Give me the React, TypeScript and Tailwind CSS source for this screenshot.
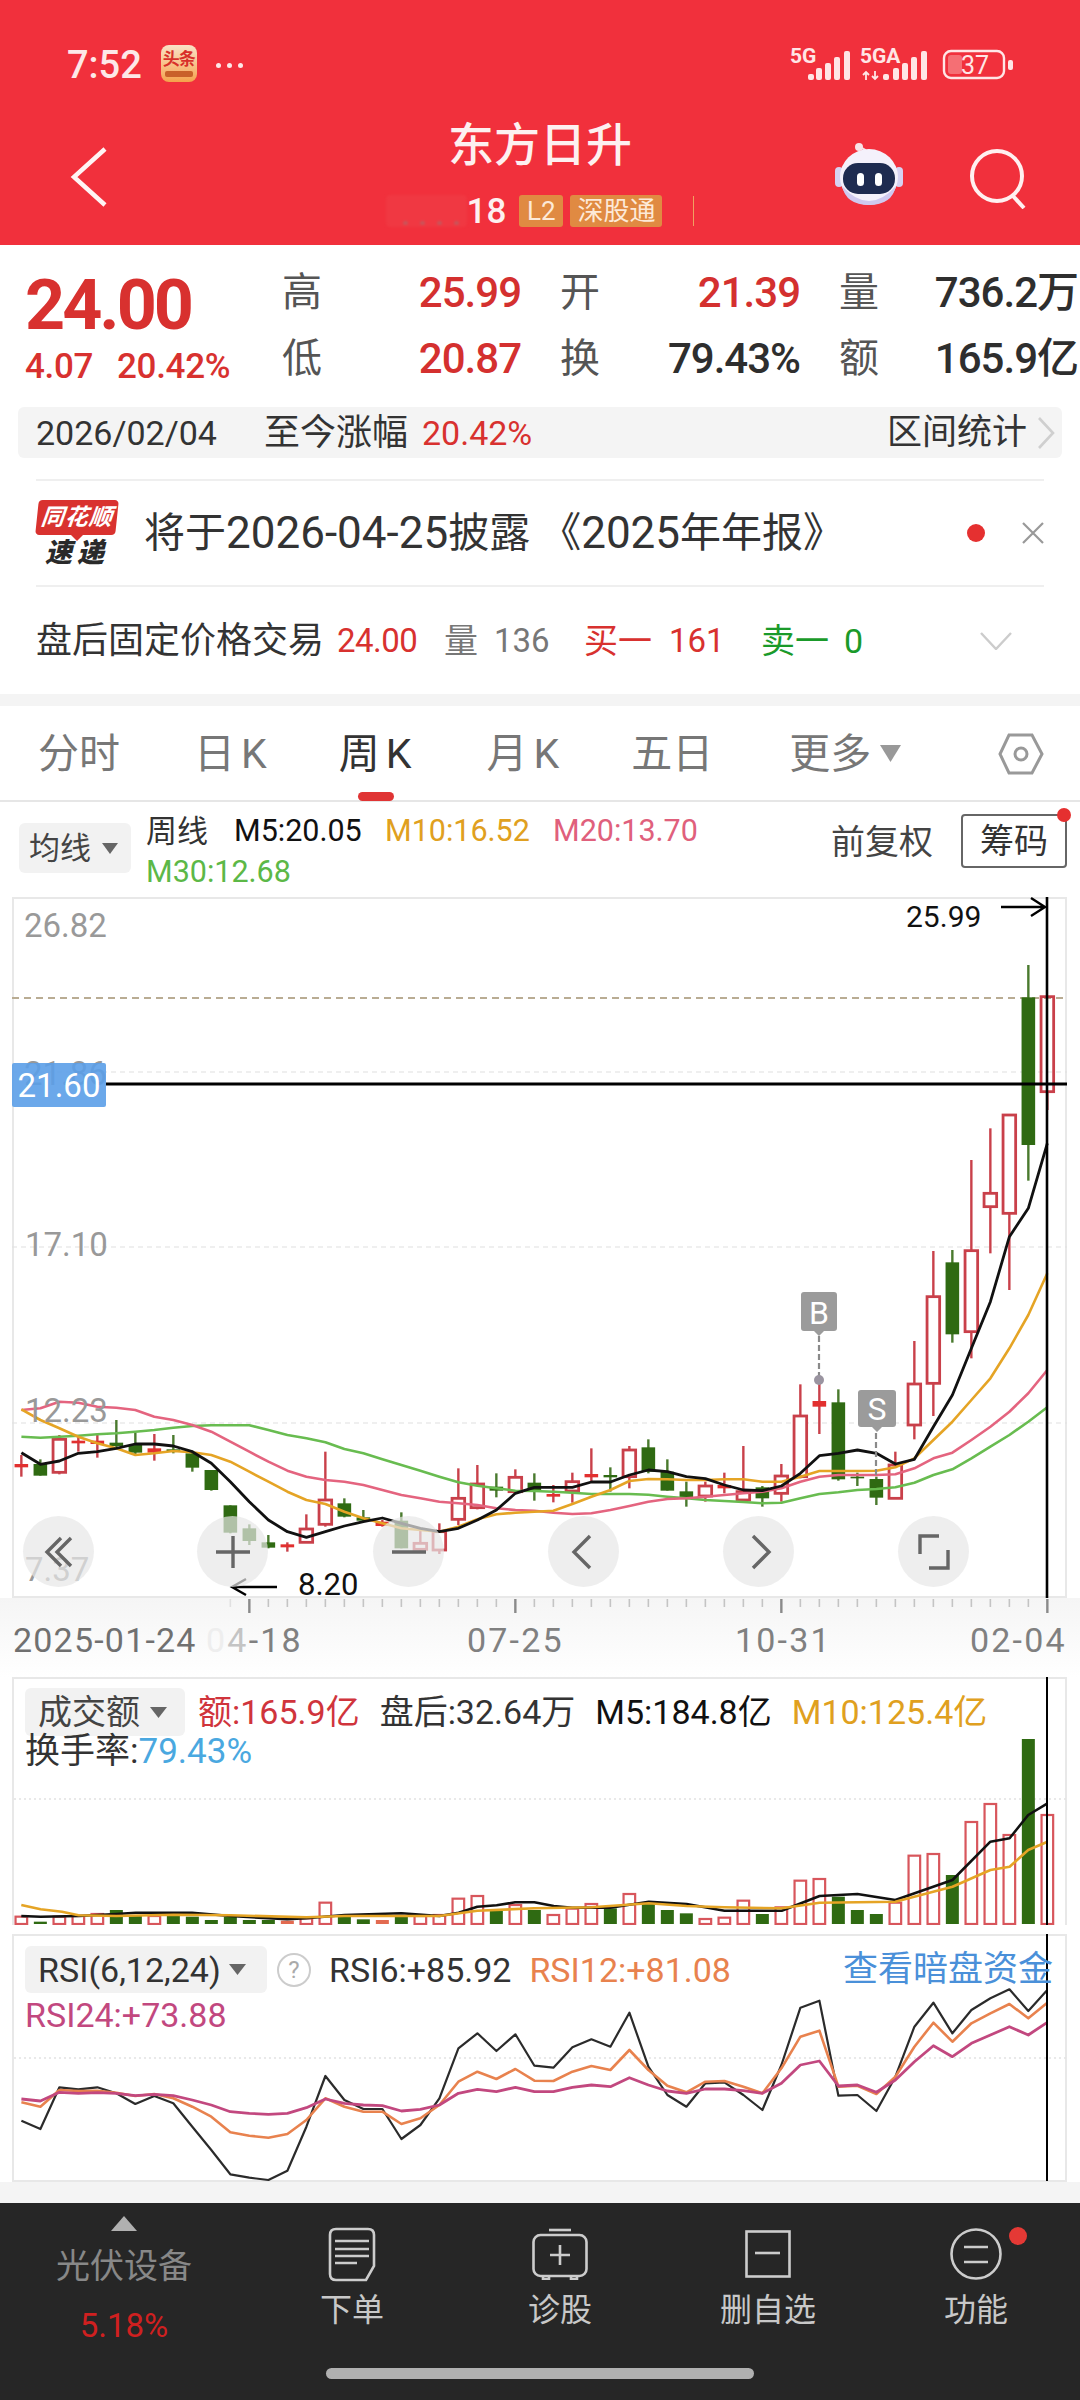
import React from "react";

const X = (i: number) => 21.35 + 19 * i;
const Y = (z: number) => 1280 + z / 3;

// [high, bodyTop, bodyBottom, low, kind] in crop units; kind: h hollow red, r solid red, g solid green
type C = [number, number, number, number, string];
const candles: C[] = [
  [525, 552, 562, 590, "r"], [538, 552, 587, 587, "g"], [465, 478, 577, 583, "h"], [470, 482, 490, 515, "r"],
  [462, 482, 492, 533, "r"], [420, 488, 498, 505, "g"], [458, 495, 518, 525, "g"], [462, 505, 518, 542, "r"],
  [465, 508, 515, 520, "g"], [512, 520, 563, 575, "g"], [570, 570, 630, 632, "g"], [676, 676, 758, 760, "g"],
  [733, 745, 783, 795, "g"], [765, 787, 803, 805, "g"], [787, 793, 802, 815, "r"], [703, 747, 787, 787, "h"],
  [515, 660, 733, 740, "h"], [655, 670, 710, 712, "g"], [690, 712, 722, 725, "g"], [720, 725, 738, 740, "r"],
  [697, 722, 805, 805, "g"], [745, 790, 808, 815, "h"], [730, 755, 810, 822, "h"], [565, 655, 718, 735, "h"],
  [555, 612, 683, 688, "h"], [580, 620, 632, 652, "g"], [568, 592, 635, 640, "h"], [580, 608, 630, 662, "g"],
  [615, 642, 650, 667, "r"], [578, 605, 633, 668, "h"], [505, 582, 592, 605, "r"], [562, 585, 592, 635, "g"],
  [498, 510, 590, 625, "h"], [478, 502, 575, 580, "g"], [538, 575, 632, 632, "g"], [605, 634, 655, 680, "g"],
  [605, 618, 648, 665, "h"], [578, 615, 625, 640, "r"], [498, 635, 660, 660, "h"], [618, 622, 655, 680, "g"],
  [552, 588, 640, 665, "h"], [313, 408, 590, 595, "h"], [310, 363, 380, 462, "r"], [328, 367, 598, 602, "g"],
  [578, 590, 595, 618, "g"], [590, 597, 653, 675, "g"], [515, 555, 655, 655, "h"], [183, 312, 435, 478, "h"],
  [-87, 50, 310, 408, "h"], [-90, -53, 163, 188, "g"], [-360, -88, 155, 235, "h"], [-455, -260, -220, -80, "h"],
  [-495, -495, -200, 30, "h"], [-945, -848, -405, -298, "g"], [-850, -850, -565, -510, "h"],
];

const m5 = [518,553,543,520,515,505,492,492,498,515,550,605,665,720,755,772,755,738,725,714,730,745,755,745,720,690,640,622,622,622,606,606,585,570,575,590,596,615,630,632,618,580,527,520,510,520,552,538,440,345,205,65,-130,-215,-410];
const m10 = [388,420,445,470,490,505,525,520,513,517,525,545,575,605,635,660,672,695,715,730,745,750,755,740,718,703,698,695,692,672,650,630,603,597,598,600,600,598,598,605,605,590,573,573,573,572,562,535,480,425,360,295,205,105,-20];
const m20 = [390,385,365,368,380,383,390,410,420,435,455,485,515,545,572,590,600,605,615,630,645,655,665,670,675,685,690,692,698,702,700,690,678,665,657,655,650,645,640,635,625,605,590,585,585,585,583,565,535,518,480,440,395,340,270];
const m30 = [470,473,470,467,463,460,455,450,443,438,436,436,436,450,465,475,487,507,520,538,555,572,590,607,617,625,632,633,635,638,642,642,642,644,650,655,660,663,666,670,668,655,642,637,630,627,622,608,585,568,535,500,465,425,382];
const pts = (a: number[]) => a.map((v, i) => `${X(i).toFixed(1)},${Y(v).toFixed(1)}`).join(" ");

const VY = (z: number) => 1670 + z / 3;
const bars: [number, string][] = [
  [740,"h"],[755,"g"],[740,"h"],[738,"h"],[732,"h"],[720,"g"],[738,"g"],[738,"h"],[738,"g"],[740,"g"],[750,"g"],[740,"g"],[750,"g"],[750,"g"],[752,"o"],[745,"h"],[698,"h"],[740,"g"],[748,"g"],[750,"o"],[738,"g"],[738,"h"],[735,"h"],[686,"h"],[678,"h"],[722,"g"],[705,"h"],[720,"g"],[735,"h"],[716,"h"],[702,"h"],[715,"g"],[672,"h"],[700,"g"],[720,"g"],[730,"g"],[747,"h"],[743,"h"],[692,"h"],[732,"g"],[712,"h"],[632,"h"],[627,"h"],[680,"g"],[720,"g"],[732,"g"],[698,"h"],[557,"h"],[552,"h"],[615,"g"],[456,"h"],[402,"h"],[495,"h"],[207,"g"],[435,"h"],
];
const vpts = (a: number[][]) => a.map(([x, y]) => `${(x / 1.452).toFixed(1)},${VY(y).toFixed(1)}`).join(" ");
const vm5 = [[31,738],[59,740],[114,738],[169,732],[197,728],[279,728],[335,738],[417,748],[445,745],[500,735],[583,730],[638,738],[666,728],[693,710],[721,706],[748,697],[776,697],[804,708],[831,713],[886,713],[942,695],[997,702],[1052,722],[1135,722],[1190,678],[1245,672],[1300,690],[1383,630],[1438,515],[1466,505],[1493,435],[1521,400]];
const vm10 = [[31,705],[59,718],[90,725],[114,736],[169,738],[252,734],[335,736],[445,742],[500,738],[583,738],[638,738],[693,722],[776,715],[859,712],[942,700],[997,708],[1052,712],[1135,715],[1190,698],[1300,695],[1355,665],[1383,650],[1438,600],[1466,590],[1493,540],[1521,515]];

const RY = (z: number) => 1930 + z / 3;
const rsi6 = [572,597,472,478,472,490,522,498,520,590,660,733,743,750,722,590,438,510,537,537,627,585,505,355,310,363,313,407,413,352,328,350,248,410,495,530,460,457,495,540,405,233,212,497,495,543,440,290,218,310,240,205,178,243,180];
const rsi12 = [517,530,480,483,482,488,498,492,505,530,560,607,617,623,612,570,505,530,545,545,582,565,525,455,425,447,417,452,453,425,408,420,360,420,467,487,455,453,470,490,415,320,302,470,467,492,440,350,278,335,280,250,222,265,218];
const rsi24 = [507,513,487,490,488,490,497,493,497,510,525,545,550,553,550,533,507,520,525,527,543,538,525,490,478,485,472,485,485,472,465,470,443,465,483,490,477,477,482,490,460,405,393,468,465,487,450,395,347,380,340,315,290,315,277];
const rpts = (a: number[]) => a.map((v, i) => `${X(i).toFixed(1)},${RY(v).toFixed(1)}`).join(" ");

function Tri({ w, h, color, up }: { w: number; h: number; color: string; up?: boolean }) {
  return (
    <svg width={w} height={h} viewBox="0 0 10 10" preserveAspectRatio="none" className="block shrink-0">
      <polygon points={up ? "5,0 10,10 0,10" : "0,0 10,0 5,10"} fill={color} />
    </svg>
  );
}

function StatusIcons() {
  const b1 = [[808, 74], [816, 68], [825, 63], [834, 57], [844, 51]];
  const b2 = [[883, 74], [893, 68], [902, 63], [911, 57], [921, 51]];
  const c = "#ffe6e6";
  return (
    <svg width="230" height="44" viewBox="786 40 230 44" className="block">
      <text x="790" y="63" fontSize="21" fontWeight="700" fill={c} fontFamily="Roboto">5G</text>
      <text x="860" y="63" fontSize="21" fontWeight="700" fill={c} fontFamily="Roboto">5GA</text>
      {[...b1, ...b2].map(([x, y], i) => (
        <rect key={i} x={x} y={y} width="6" height={80 - y} rx="2" fill={c} />
      ))}
      <path d="M866 72v8M863 75l3-3 3 3M875 71v8M872 76l3 3 3-3" stroke={c} strokeWidth="1.8" fill="none" />
      <rect x="944" y="51" width="60" height="27" rx="7" fill="none" stroke={c} strokeWidth="2.4" />
      <rect x="948" y="55" width="14" height="19" rx="3" fill="#f56f74" />
      <rect x="1008" y="60" width="5" height="10" rx="2" fill={c} />
      <text x="975" y="74" fontSize="25" textAnchor="middle" fill={c} fontFamily="Roboto">37</text>
    </svg>
  );
}

function Robot() {
  return (
    <svg width="68" height="62" viewBox="836 143 68 62" className="block">
      <path d="M861 148q6 0 8 7" stroke="#f6dfe4" strokeWidth="2" fill="none" />
      <circle cx="860" cy="147" r="4" fill="#f8e4e8" />
      <rect x="836" y="167" width="8" height="20" rx="4" fill="#d6d2f2" />
      <rect x="896" y="167" width="8" height="20" rx="4" fill="#d6d2f2" />
      <ellipse cx="870" cy="177" rx="29" ry="28" fill="#f4f1fb" />
      <path d="M843 186q27 30 54 0q-4 19-27 19t-27-19z" fill="#cfc9ef" />
      <rect x="844" y="163" width="52" height="31" rx="15" fill="#1e2b50" />
      <rect x="858" y="173" width="7" height="13" rx="3.5" fill="#fff" />
      <rect x="876" y="173" width="7" height="13" rx="3.5" fill="#fff" />
    </svg>
  );
}

function Grid({ y }: { y: number }) {
  return <line x1="12" x2="1067" y1={y} y2={y} stroke="#e0e0e0" strokeWidth="1.2" strokeDasharray="5 4" />;
}

function PriceChart() {
  return (
    <svg viewBox="0 897 1080 701" width="1080" height="701" className="absolute left-0 top-0">
      <line x1="12" x2="1067" y1="998" y2="998" stroke="#b9ac93" strokeWidth="1.8" strokeDasharray="7 5" />
      <Grid y={1072} />
      <Grid y={1247} />
      <Grid y={1423} />
      {candles.map(([hi, top, bot, lo, k], i) => {
        const cx = X(i);
        const col = k === "g" ? "#2f6a12" : k === "r" ? "#e2302f" : "#c9404a";
        const wick = k === "g" ? "#4a7a2e" : "#c9404a";
        if (k === "h") {
          return (
            <g key={i}>
              <line x1={cx} x2={cx} y1={Y(hi)} y2={Y(top)} stroke={wick} strokeWidth="2.4" />
              <line x1={cx} x2={cx} y1={Y(bot)} y2={Y(lo)} stroke={wick} strokeWidth="2.4" />
              <rect x={cx - 6.3} y={Y(top)} width="12.6" height={Y(bot) - Y(top)} fill={i === 54 ? "none" : "#fff"} stroke={col} strokeWidth="2.8" />
            </g>
          );
        }
        return (
          <g key={i}>
            <line x1={cx} x2={cx} y1={Y(hi)} y2={Y(lo)} stroke={wick} strokeWidth="2.4" />
            <rect x={cx - 6.8} y={Y(top)} width="13.6" height={Y(bot) - Y(top)} fill={col} />
          </g>
        );
      })}
      <polyline points={pts(m30)} fill="none" stroke="#68bc50" strokeWidth="2.6" strokeLinejoin="round" />
      <polyline points={pts(m20)} fill="none" stroke="#e4647f" strokeWidth="2.6" strokeLinejoin="round" />
      <polyline points={pts(m10)} fill="none" stroke="#e5a425" strokeWidth="2.6" strokeLinejoin="round" />
      <polyline points={pts(m5)} fill="none" stroke="#111" strokeWidth="2.8" strokeLinejoin="round" />
      {/* B / S markers */}
      <line x1="819" x2="819" y1="1336" y2="1381" stroke="#8a8a8a" strokeWidth="2.2" strokeDasharray="6 3" />
      <circle cx="819" cy="1380" r="5" fill="#9a94a0" />
      <path d="M801 1295a3 3 0 0 1 3-3h30a3 3 0 0 1 3 3v33a3 3 0 0 1-3 3h-10l-5 5-5-5h-10a3 3 0 0 1-3-3z" fill="#9b9b9b" />
      <line x1="876" x2="876" y1="1433" y2="1476" stroke="#8a8a8a" strokeWidth="2.2" strokeDasharray="6 3" />
      <path d="M858 1393a3 3 0 0 1 3-3h32a3 3 0 0 1 3 3v31a3 3 0 0 1-3 3h-11l-5 5-5-5h-11a3 3 0 0 1-3-3z" fill="#9b9b9b" />
      {/* crosshair */}
      <line x1="106" x2="1067" y1="1084" y2="1084" stroke="#000" strokeWidth="3" />
      <line x1="1047" x2="1047" y1="897" y2="1598" stroke="#000" strokeWidth="2.6" />
      {/* max / min arrows */}
      <path d="M1001 907H1045M1031 898L1045 907L1031 916" stroke="#000" strokeWidth="2.4" fill="none" />
      <path d="M277 1587H232M246 1579L232 1587L246 1595" stroke="#000" strokeWidth="2.4" fill="none" />
    </svg>
  );
}

function Round({ left, children }: { left: string; children: React.ReactNode }) {
  return (
    <div className={`absolute top-[619px] flex h-[71px] w-[71px] items-center justify-center rounded-full bg-[rgba(231,231,231,0.7)] ${left}`}>
      <svg width="44" height="44" viewBox="0 0 44 44" fill="none" stroke="#666" strokeWidth="3.4">
        {children}
      </svg>
    </div>
  );
}

function XTicks() {
  const ticks = [];
  for (let i = 11; i < 55; i++) {
    const major = i === 12 || i === 26 || i === 40 || i === 54;
    ticks.push(
      <line key={i} x1={X(i)} x2={X(i)} y1="1" y2={major ? 15 : 9} stroke={i === 11 ? "#e0e0e0" : major ? "#8a8a8a" : "#c4c4c4"} strokeWidth={major ? 2.4 : 1.6} />
    );
  }
  return (
    <svg width="1080" height="16" viewBox="0 0 1080 16" className="block">
      {ticks}
    </svg>
  );
}

function VolumeChart() {
  return (
    <svg viewBox="0 1677 1080 248" width="1080" height="248" className="absolute left-0 top-0">
      <line x1="14" x2="1066" y1="1799" y2="1799" stroke="#e2e2e2" strokeWidth="1.4" strokeDasharray="2 3" />
      {bars.map(([t, k], i) => {
        const cx = X(i);
        const y = VY(t);
        if (k === "g") return <rect key={i} x={cx - 6.5} y={y} width="13" height={1924 - y} fill="#2f6a12" />;
        if (k === "o") return <rect key={i} x={cx - 6.5} y={y} width="13" height={1924 - y} fill="#e26a50" />;
        return <rect key={i} x={cx - 5.8} y={y} width="11.6" height={1924 - y} fill="none" stroke="#d8565c" strokeWidth="2.2" />;
      })}
      <polyline points={vpts(vm5)} fill="none" stroke="#111" strokeWidth="2.6" strokeLinejoin="round" />
      <polyline points={vpts(vm10)} fill="none" stroke="#e5a425" strokeWidth="2.6" strokeLinejoin="round" />
      <line x1="1047" x2="1047" y1="1677" y2="1925" stroke="#000" strokeWidth="2" />
    </svg>
  );
}

function RsiChart() {
  return (
    <svg viewBox="0 1934 1080 248" width="1080" height="248" className="absolute left-0 top-0">
      <line x1="14" x2="1066" y1="2058" y2="2058" stroke="#e2e2e2" strokeWidth="1.4" strokeDasharray="2 3" />
      <polyline points={rpts(rsi6)} fill="none" stroke="#2b2b2b" strokeWidth="2.2" strokeLinejoin="round" />
      <polyline points={rpts(rsi12)} fill="none" stroke="#e8824e" strokeWidth="2.6" strokeLinejoin="round" />
      <polyline points={rpts(rsi24)} fill="none" stroke="#c2487f" strokeWidth="2.8" strokeLinejoin="round" />
      <line x1="1047" x2="1047" y1="1934" y2="2181" stroke="#000" strokeWidth="2" />
    </svg>
  );
}

function Cell({ label, value, dark }: { label: string; value: string; dark?: boolean }) {
  return (
    <div className="flex h-[66px] items-center justify-between">
      <span className="text-[40px] leading-none text-[#555]">{label}</span>
      <span className={`text-[42px] font-medium leading-none tracking-[-1px] ${dark ? "text-[#2e2e2e]" : "text-[#d4302f]"}`}>{value}</span>
    </div>
  );
}

function NavItem({ icon, label }: { icon: React.ReactNode; label: string }) {
  return (
    <div className="flex flex-col items-center pt-[24px]">
      <div className="flex h-[54px] items-center justify-center">{icon}</div>
      <span className="mt-[13px] text-[32px] leading-[32px] text-[#c8c8c8]">{label}</span>
    </div>
  );
}

export default function App() {
  return (
    <div className="flex h-[2400px] w-[1080px] flex-col overflow-hidden bg-white font-['Roboto','Noto_Sans_CJK_SC',sans-serif]">
      {/* Header */}
      <header className="h-[245px] shrink-0 bg-[#f1303c] text-white">
        <div className="flex h-[120px] items-start pl-[67px] pr-[64px] pt-[45px]">
          <span className="text-[38px] font-medium leading-[40px] text-[#fde8e8]">7:52</span>
          <div className="ml-[19px] flex h-[37px] w-[36px] flex-col items-center overflow-hidden rounded-[8px] bg-gradient-to-b from-[#f9e2c6] to-[#f4a24a] pt-[5px]">
            <span className="text-[17px] font-bold leading-[19px] tracking-[-1px] text-[#d8302a]">头条</span>
            <span className="mt-[2px] h-[6px] w-[28px] rounded-[2px] bg-[#c9602a]" />
          </div>
          <div className="ml-[19px] mt-[18px] flex gap-[6px]">
            <span className="h-[5px] w-[5px] rounded-full bg-[#fde8e8]" />
            <span className="h-[5px] w-[5px] rounded-full bg-[#fde8e8]" />
            <span className="h-[5px] w-[5px] rounded-full bg-[#fde8e8]" />
          </div>
          <div className="ml-auto mt-[-5px]">
            <StatusIcons />
          </div>
        </div>
        <div className="grid h-[125px] grid-cols-[1fr_auto_1fr]">
          <div className="pl-[70px] pt-[27px]">
            <svg width="37" height="60" viewBox="0 0 37 60" fill="none" stroke="#fff4f4" strokeWidth="4.5">
              <path d="M35 2L4 30L35 58" />
            </svg>
          </div>
          <div className="flex flex-col items-center">
            <span className="text-[46px] font-medium leading-[50px] text-[#fdf0f0]">东方日升</span>
            <div className="mt-[25px] flex h-[32px] items-center">
              <span className="flex h-[32px] w-[81px] items-end justify-end gap-[12px] rounded-[4px] bg-[#f03842] pb-[2px] pr-[8px] blur-[1px]">
                <span className="h-[4px] w-[5px] rounded-full bg-[#c8555a]" />
                <span className="h-[4px] w-[5px] rounded-full bg-[#c8555a]" />
                <span className="h-[4px] w-[5px] rounded-full bg-[#c8555a]" />
                <span className="h-[4px] w-[5px] rounded-full bg-[#c8555a]" />
              </span>
              <span className="text-[35px] font-medium leading-none text-[#fdf0f0]">18</span>
              <span className="ml-[13px] flex h-[32px] w-[44px] items-center justify-center rounded-[3px] bg-[#e08a42] text-[26px] leading-none text-[#fde9d8]">L2</span>
              <span className="ml-[7px] flex h-[32px] w-[92px] items-center justify-center rounded-[3px] bg-[#e08a42] text-[26px] leading-none text-[#fde9d8]">深股通</span>
              <span className="ml-[31px] h-[30px] w-[1px] bg-[#f0a060]" />
            </div>
          </div>
          <div className="flex items-start justify-end pr-[51px] pt-[23px]">
            <Robot />
            <svg width="60" height="60" viewBox="0 0 60 60" fill="none" stroke="#fff0f0" strokeWidth="4" className="ml-[66px] mt-[6px]">
              <circle cx="28" cy="27" r="25" />
              <path d="M44 47L55 59" />
            </svg>
          </div>
        </div>
      </header>

      {/* Quote */}
      <section className="h-[234px] shrink-0">
        <div className="flex h-[162px] items-start">
          <div className="w-[282px] shrink-0 pl-[25px] pt-[23px]">
            <div className="text-[70px] font-bold leading-[74px] tracking-[-3px] text-[#d8312f]">24.00</div>
            <div className="mt-[7px] flex text-[35px] font-medium leading-[36px] tracking-[-0.3px] text-[#d8312f]">
              <span className="w-[92px]">4.07</span>
              <span>20.42%</span>
            </div>
          </div>
          <div className="grid grid-cols-[239px_240px_239px] gap-x-[39px] pt-[15px]">
            <Cell label="高" value="25.99" />
            <Cell label="开" value="21.39" />
            <Cell label="量" value="736.2万" dark />
            <Cell label="低" value="20.87" />
            <Cell label="换" value="79.43%" dark />
            <Cell label="额" value="165.9亿" dark />
          </div>
        </div>
        <div className="mx-[18px] flex h-[51px] items-center rounded-[6px] bg-[#f4f4f4] pl-[18px] pr-[7px] text-[35px] leading-none text-[#333]">
          <span className="text-[34px]">2026/02/04</span>
          <span className="ml-[47px] text-[36px]">至今涨幅</span>
          <span className="ml-[14px] text-[34px] text-[#d8312f]">20.42%</span>
          <span className="ml-auto">区间统计</span>
          <svg width="18" height="32" viewBox="0 0 18 32" fill="none" stroke="#cfcfcf" strokeWidth="2.6" className="ml-[10px]">
            <path d="M2 1L16 16L2 31" />
          </svg>
        </div>
      </section>

      {/* Notice */}
      <section className="mx-[36px] flex h-[108px] shrink-0 items-center border-y-2 border-[#efefef]">
        <div className="flex w-[82px] shrink-0 flex-col items-center">
          <div className="flex h-[35px] w-[80px] -skew-x-6 items-center justify-center rounded-[4px] bg-[#d9322f] text-[23px] font-bold italic leading-none tracking-[1px] text-white">
            同花顺
          </div>
          <div className="h-0 w-0 border-x-[6px] border-t-[6px] border-x-transparent border-t-[#d9322f]" />
          <div className="mt-[-1px] text-[27px] font-black italic leading-[27px] tracking-[5px] text-[#2a2a2a]">速递</div>
        </div>
        <span className="ml-[26px] flex items-center text-[41px] leading-none text-[#333]">
          将于<span className="text-[44px]">2026-04-25</span>披露<span className="ml-[10px]">《</span><span className="text-[44px]">2025</span>年年报<span>》</span>
        </span>
        <span className="ml-auto h-[18px] w-[18px] rounded-full bg-[#e53030]" />
        <svg width="22" height="22" viewBox="0 0 22 22" stroke="#999" strokeWidth="2.2" className="ml-[37px]">
          <path d="M1 1L21 21M21 1L1 21" />
        </svg>
      </section>

      {/* After-hours row */}
      <section className="flex h-[107px] shrink-0 items-center pl-[36px] text-[34px] leading-none">
        <span className="w-[301px] text-[36px] text-[#333]">盘后固定价格交易</span>
        <span className="w-[107px] text-[33px] tracking-[-0.5px] text-[#d8312f]">24.00</span>
        <span className="w-[50px] text-[#777]">量</span>
        <span className="w-[90px] text-[33px] text-[#777]">136</span>
        <span className="w-[85px] text-[#d8312f]">买一</span>
        <span className="w-[92px] text-[33px] text-[#d8312f]">161</span>
        <span className="w-[83px] text-[#1a9a2a]">卖一</span>
        <span className="text-[#1a9a2a]">0</span>
        <svg width="32" height="18" viewBox="0 0 32 18" fill="none" stroke="#ccc" strokeWidth="2.4" className="ml-[117px]">
          <path d="M1 1L16 17L31 1" />
        </svg>
      </section>

      <div className="h-[12px] shrink-0 bg-[#f4f4f4]" />

      {/* Tabs */}
      <nav className="relative flex h-[96px] shrink-0 items-start border-b-2 border-[#e6e6e6] pl-[38px] pt-[26px] text-[41px] leading-[44px] text-[#777]">
        <span>分时</span>
        <span className="ml-[74px]">
          日<span className="ml-[6px]">K</span>
        </span>
        <span className="relative ml-[72px] text-[#333]">
          周<span className="ml-[6px]">K</span>
          <span className="absolute left-[19px] top-[60px] h-[9px] w-[36px] rounded-full bg-[#e03434]" />
        </span>
        <span className="ml-[75px]">
          月<span className="ml-[6px]">K</span>
        </span>
        <span className="ml-[72px]">五日</span>
        <span className="ml-[76px]">更多</span>
        <span className="ml-[9px] mt-[13px]">
          <Tri w={21} h={17} color="#999" />
        </span>
        <svg width="46" height="42" viewBox="999 733 46 42" fill="none" stroke="#999" strokeWidth="3" className="ml-[97px] mt-[1px]">
          <path d="M1010 735H1033L1043 754L1033 773H1010L1001 754Z" />
          <circle cx="1022" cy="754" r="6" />
        </svg>
      </nav>

      {/* MA legend */}
      <section className="flex h-[95px] shrink-0 pl-[19px] pr-[13px]">
        <div className="mt-[21px] flex h-[50px] w-[112px] shrink-0 items-center rounded-[6px] bg-[#f2f2f2] pl-[10px] text-[31px] leading-none text-[#444]">
          均线
          <span className="ml-[11px]">
            <Tri w={16} h={11} color="#666" />
          </span>
        </div>
        <div className="ml-[15px] pt-[10px] text-[30.5px] leading-none">
          <div className="flex h-[38px] items-center">
            <span className="w-[88px] text-[31px] text-[#333]">周线</span>
            <span className="w-[151px] text-[#111]">M5:20.05</span>
            <span className="w-[168px] text-[#e0a020]">M10:16.52</span>
            <span className="text-[#e0607c]">M20:13.70</span>
          </div>
          <div className="flex h-[44px] items-center text-[#5cb847]">M30:12.68</div>
        </div>
        <span className="ml-auto mt-[23px] text-[34px] leading-none text-[#444]">前复权</span>
        <div className="relative ml-[28px] mt-[12px] flex h-[54px] w-[106px] items-center justify-center rounded-[4px] border-2 border-[#666] text-[34px] leading-none text-[#333]">
          筹码
          <span className="absolute right-[-6px] top-[-8px] h-[14px] w-[14px] rounded-full bg-[#e53030]" />
        </div>
      </section>

      {/* Price chart */}
      <section className="relative h-[701px] shrink-0">
        <div className="absolute inset-y-0 left-[12px] right-[13px] border-2 border-[#e8e8e8]" />
        <PriceChart />
        <span className="absolute left-[24px] top-[12px] text-[33px] leading-none text-[#999]">26.82</span>
        <span className="absolute left-[24px] top-[160px] text-[33px] leading-none text-[#999]">21.86</span>
        <span className="absolute left-[25px] top-[331px] text-[33px] leading-none text-[#999]">17.10</span>
        <span className="absolute left-[25px] top-[497px] text-[33px] leading-none text-[#999]">12.23</span>
        <span className="absolute left-[25px] top-[656px] text-[33px] leading-none text-[#999]">7.37</span>
        <span className="absolute left-[12px] top-[166px] flex h-[44px] w-[94px] items-center justify-center rounded-[2px] bg-[#5b9fe8]/90 text-[33px] leading-none text-white">
          21.60
        </span>
        <span className="absolute left-[906px] top-[5px] text-[30px] leading-none text-[#111]">25.99</span>
        <span className="absolute left-[298px] top-[672px] text-[31px] leading-none text-[#111]">8.20</span>
        <span className="absolute left-[801px] top-[397px] flex h-[38px] w-[36px] items-center justify-center text-[32px] leading-none text-white">B</span>
        <span className="absolute left-[858px] top-[494px] flex h-[36px] w-[38px] items-center justify-center text-[32px] leading-none text-white">S</span>
        <Round left="left-[23px]">
          <path d="M24 8L10 22L24 36M34 8L20 22L34 36" />
        </Round>
        <Round left="left-[197px]">
          <path d="M22 6V38M5 22H39" />
        </Round>
        <Round left="left-[373px]">
          <path d="M5 22H39" />
        </Round>
        <Round left="left-[548px]">
          <path d="M28 6L12 22L28 38" />
        </Round>
        <Round left="left-[723px]">
          <path d="M16 6L32 22L16 38" />
        </Round>
        <Round left="left-[898px]">
          <path d="M27 6H8V24M17 38H36V20" />
        </Round>
      </section>

      {/* X axis */}
      <section className="h-[79px] shrink-0 bg-gradient-to-b from-[#f5f5f5] to-white">
        <XTicks />
        <div className="mt-[11px] grid grid-cols-[193px_261px_268px_235px_auto] pl-[13px] text-[34px] leading-[30px] tracking-[2.2px] text-[#808080]">
          <span className="whitespace-nowrap tracking-[1.2px] text-[#707070]">2025-01-24</span>
          <span className="whitespace-nowrap">
            <span className="text-[#eeeeee]">0</span>
            <span className="text-[#c4c4c4]">4</span>-18
          </span>
          <span>07-25</span>
          <span>10-31</span>
          <span>02-04</span>
        </div>
      </section>

      {/* Volume */}
      <section className="relative h-[248px] shrink-0">
        <div className="absolute inset-0 left-[12px] right-[13px] border-x-2 border-t-2 border-[#e8e8e8]" />
        <VolumeChart />
        <div className="relative pl-[25px] pt-[11px] text-[34px] leading-none">
          <div className="flex items-center">
            <div className="flex h-[48px] w-[160px] items-center rounded-[6px] bg-[#f2f2f2] pl-[13px] text-[#444]">
              成交额
              <span className="ml-[10px]">
                <Tri w={17} h={11} color="#666" />
              </span>
            </div>
            <span className="ml-[13px] text-[#d0343c]">额:165.9亿</span>
            <span className="ml-[20px] text-[#333]">盘后:32.64万</span>
            <span className="ml-[20px] text-[#111]">M5:184.8亿</span>
            <span className="ml-[20px] text-[#e0a020]">M10:125.4亿</span>
          </div>
          <div className="mt-[-2px] text-[35px] text-[#333]">
            换手率:<span className="text-[#4aa8e0]">79.43%</span>
          </div>
        </div>
      </section>

      <div className="h-[9px] shrink-0" />

      {/* RSI */}
      <section className="relative h-[248px] shrink-0">
        <div className="absolute inset-0 left-[12px] right-[13px] border-2 border-[#e8e8e8]" />
        <RsiChart />
        <div className="relative pl-[25px] pt-[12px] text-[34px] leading-none">
          <div className="flex items-center">
            <div className="flex h-[47px] w-[242px] items-center rounded-[6px] bg-[#f2f2f2] pl-[13px] text-[#333]">
              RSI(6,12,24)
              <span className="ml-[8px]">
                <Tri w={17} h={11} color="#666" />
              </span>
            </div>
            <span className="ml-[10px] flex h-[34px] w-[34px] items-center justify-center rounded-full border-2 border-[#ccc] text-[24px] text-[#aaa]">?</span>
            <span className="ml-[18px] text-[#333]">RSI6:+85.92</span>
            <span className="ml-[18px] text-[#e8824e]">RSI12:+81.08</span>
            <span className="ml-[112px] text-[35px] text-[#4a90d9]">查看暗盘资金</span>
          </div>
          <div className="mt-[5px] text-[#c2487f]">RSI24:+73.88</div>
        </div>
      </section>

      <div className="flex-1 bg-[#f4f4f4]" />

      {/* Bottom bar */}
      <footer className="h-[197px] shrink-0 bg-[#262626]">
        <div className="grid h-[165px] grid-cols-[248px_repeat(4,208px)]">
          <div className="flex flex-col items-center pt-[13px]">
            <Tri w={26} h={15} color="#b0b0b0" up />
            <span className="mt-[17px] text-[34px] leading-[36px] text-[#888]">光伏设备</span>
            <span className="mt-[25px] text-[33px] leading-[34px] text-[#d02020]">5.18%</span>
          </div>
          <NavItem
            label="下单"
            icon={
              <svg width="48" height="55" viewBox="0 0 48 55" fill="none" stroke="#ccc" strokeWidth="2.6">
                <path d="M8 2H40Q46 2 46 8V39L38 53H8Q2 53 2 47V8Q2 2 8 2Z" />
                <path d="M7 14H41M7 22H41M7 29H41M7 36H29" />
              </svg>
            }
          />
          <NavItem
            label="诊股"
            icon={
              <svg width="56" height="52" viewBox="0 0 56 52" fill="none" stroke="#ccc" strokeWidth="2.6">
                <path d="M17 2H39" />
                <rect x="1.5" y="7" width="53" height="41" rx="7" />
                <path d="M28 17V37M18 27H38" />
                <path d="M11 48V51H17V48M39 48V51H45V48" />
              </svg>
            }
          />
          <NavItem
            label="删自选"
            icon={
              <svg width="46" height="48" viewBox="0 0 46 48" fill="none" stroke="#ccc" strokeWidth="2.6">
                <rect x="1.5" y="1.5" width="43" height="45" />
                <path d="M10 23H35" />
              </svg>
            }
          />
          <div className="relative">
            <NavItem
              label="功能"
              icon={
                <svg width="52" height="52" viewBox="0 0 52 52" fill="none" stroke="#ccc" strokeWidth="2.6">
                  <circle cx="26" cy="26" r="24.5" />
                  <path d="M14 19H38M14 34H38" />
                </svg>
              }
            />
            <span className="absolute left-[137px] top-[24px] h-[18px] w-[18px] rounded-full bg-[#e53935]" />
          </div>
        </div>
        <div className="ml-[326px] h-[11px] w-[428px] rounded-full bg-[#b0b0b0]" />
      </footer>
    </div>
  );
}
